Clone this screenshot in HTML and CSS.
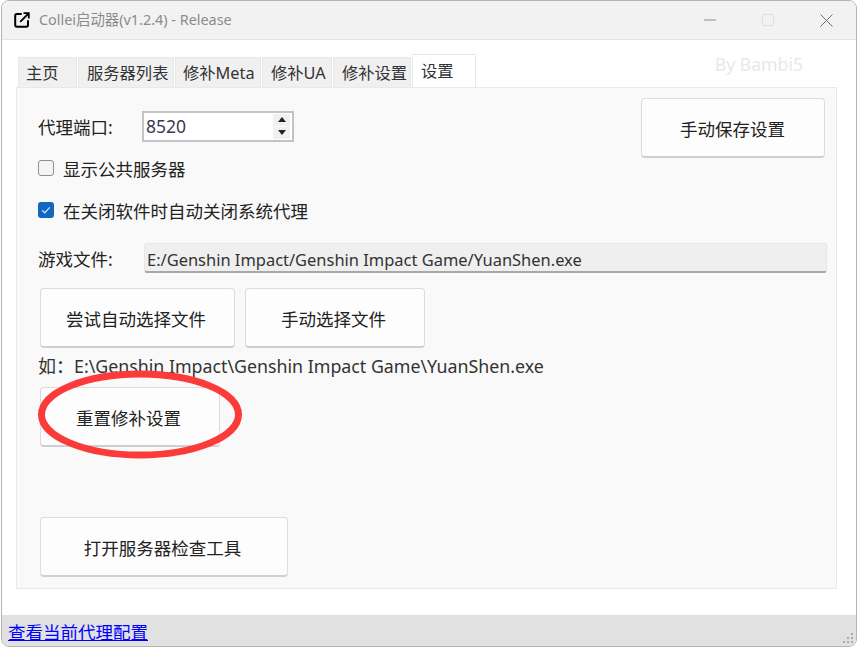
FILE: index.html
```html
<!DOCTYPE html>
<html lang="zh">
<head>
<meta charset="utf-8">
<title>Collei启动器</title>
<link rel="stylesheet" href="styles.css">
</head>
<body>
<div class="window">
  <header class="titlebar">
    <svg class="app-icon" viewBox="0 0 16 16" width="16" height="16"><path d="M7.800 2H3A1.800 1.800 0 0 0 1.200 3.800V13A1.800 1.800 0 0 0 3 14.800h9.200A1.800 1.800 0 0 0 14 13V8.200" fill="none" stroke="#000" stroke-width="2"/><path d="M6.200 9.800 14 2M9.500 1.200h5.300v5.300" fill="none" stroke="#000" stroke-width="1.800"/></svg>
    <span class="title">Collei启动器(v1.2.4) - Release</span>
    <div class="controls">
      <svg width="12" height="12" viewBox="0 0 12 12"><path d="M0 6h12" stroke="#8c8c8c"/></svg>
      <svg width="12" height="12" viewBox="0 0 12 12"><rect x=".5" y=".5" width="11" height="11" rx="1.500" fill="none" stroke="#dedede"/></svg>
      <svg width="13" height="13" viewBox="0 0 13 13"><path d="M.5.5l12 12M12.500.5l-12 12" stroke="#707070"/></svg>
    </div>
  </header>
  <main class="content">
    <nav class="tabs">
      <span class="tab t1">主页</span>
      <span class="tab t2">服务器列表</span>
      <span class="tab t3">修补Meta</span>
      <span class="tab t4">修补UA</span>
      <span class="tab t5">修补设置</span>
      <span class="tab active">设置</span>
      <span class="by">By Bambi5</span>
    </nav>
    <section class="pane">
      <div class="top">
        <div class="options">
          <div class="port-row">
            <label class="port-label">代理端口:</label>
            <div class="spin">
              <span class="spin-val">8520</span>
              <div class="spin-btns">
                <span class="spin-btn"><i class="up"></i></span>
                <span class="spin-btn"><i class="down"></i></span>
              </div>
            </div>
          </div>
          <div class="check-row r1"><span class="box"></span>显示公共服务器</div>
          <div class="check-row r2"><span class="box on"><svg viewBox="0 0 16 16" width="16" height="16"><path d="M4.200 8.300l2.600 2.500 5-5.400" fill="none" stroke="#cfe3f7" stroke-width="1.300"/></svg></span>在关闭软件时自动关闭系统代理</div>
        </div>
        <button class="btn save">手动保存设置</button>
      </div>
      <div class="file-row">
        <label class="file-label">游戏文件:</label>
        <div class="file-input">E:/Genshin Impact/Genshin Impact Game/YuanShen.exe</div>
      </div>
      <div class="btn-row">
        <button class="btn auto">尝试自动选择文件</button>
        <button class="btn manual">手动选择文件</button>
      </div>
      <p class="hint"><span class="hint-mark">如：</span>E:\Genshin Impact\Genshin Impact Game\YuanShen.exe</p>
      <button class="btn reset">重置修补设置</button>
      <button class="btn check">打开服务器检查工具</button>
    </section>
  </main>
  <footer class="status">
    <a class="link" href="#">查看当前代理配置</a>
    <svg class="grip" width="14" height="14" viewBox="0 0 14 14" fill="#a8a8a8"><rect x="10" y="1" width="2" height="2"/><rect x="6" y="5" width="2" height="2"/><rect x="10" y="5" width="2" height="2"/><rect x="2" y="9" width="2" height="2"/><rect x="6" y="9" width="2" height="2"/><rect x="10" y="9" width="2" height="2"/></svg>
  </footer>
</div>
<svg class="circle" width="859" height="648" viewBox="0 0 859 648"><ellipse cx="140" cy="414.500" rx="98.500" ry="40.500" fill="none" stroke="#fb3a3a" stroke-width="7"/></svg>
</body>
</html>
```
FILE: styles.css
```css
* { box-sizing: border-box; }
html, body { margin: 0; padding: 0; background: #fff; }
body {
  position: relative;
  width: 859px;
  height: 648px;
  overflow: hidden;
  font-family: "Noto Sans", "Noto Sans CJK SC", sans-serif;
  font-size: 17.5px;
  color: #222;
}
.window {
  margin-left: 1px;
  width: 856px;
  height: 647px;
  border: 1px solid #b4b4b4;
  border-radius: 8px;
  overflow: hidden;
  display: flex;
  flex-direction: column;
  background: #fff;
}
.titlebar {
  height: 39px;
  flex: none;
  background: #f2f2f2;
  border-bottom: 1px solid #e3e3e3;
  display: flex;
  align-items: center;
  padding-left: 12px;
}
.app-icon { flex: none; }
.title { margin-left: 9px; font-size: 14.4px; color: #8b8b8b; line-height: 1; }
.controls {
  margin-left: auto;
  width: 129px;
  margin-right: 23px;
  display: flex;
  align-items: center;
  justify-content: space-between;
}
.content { flex: 1; padding: 13px 0 0 14px; }
.tabs { display: flex; align-items: flex-end; height: 34px; position: relative; padding-left: 2px; }
.tab {
  height: 30px;
  background: #f0f0f0;
  border: 1px solid #e8e8e8;
  border-bottom: 0;
  font-size: 16.3px;
  line-height: 30px;
  padding-left: 7px;
  white-space: nowrap;
  color: #333;
  flex: none;
  margin-right: 1px;
}
.t1 { width: 59px; }
.t2 { width: 96px; padding-left: 8px; }
.t3 { width: 86px; }
.t4 { width: 70px; padding-left: 8px; }
.t5 { width: 78px; padding-left: 8px; }
.tab.active {
  width: 64px;
  height: 33px;
  line-height: 32px;
  padding-left: 8px;
  background: #fff;
  margin-right: 0;
}
.by { margin-left: auto; margin-right: 53px; align-self: center; font-size: 17.6px; color: #e9e9e9; margin-top: -13px; }
.pane {
  width: 821px;
  height: 502px;
  background: #f9f9f9;
  border: 1px solid #e9e9e9;
  padding: 10px 11px 0 22px;
  display: flex;
  flex-direction: column;
  align-items: flex-start;
}
.top { display: flex; justify-content: space-between; align-items: flex-start; width: 100%; height: 145px; }
.options { display: flex; flex-direction: column; }
.port-row { display: flex; align-items: center; margin-top: 13px; height: 30px; }
.port-label { width: 104px; margin-left: -1px; }
.spin {
  width: 152px;
  height: 31px;
  background: #fff;
  border: 2px solid #c2c2c8;
  display: flex;
  align-items: center;
  justify-content: space-between;
  padding: 0 2px;
}
.spin-val { font-size: 17.500px; color: #3a3a50; }
.spin-btns { display: flex; flex-direction: column; gap: 1px; }
.spin-btn { width: 17px; height: 12px; background: #f0f0f0; display: flex; align-items: center; justify-content: center; }
.up { width: 0; height: 0; border: 4px solid transparent; border-top: 0; border-bottom: 5px solid #222; }
.down { width: 0; height: 0; border: 4px solid transparent; border-bottom: 0; border-top: 5px solid #222; }
.check-row { display: flex; align-items: center; margin-left: -1px; height: 24px; }
.r1 { margin-top: 15px; }
.r2 { margin-top: 18px; }
.box {
  width: 16px;
  height: 16px;
  margin-right: 9px;
  border: 1px solid #8e8e8e;
  border-radius: 3px;
  background: #f4f4f4;
  flex: none;
}
.box.on { border: 0; background: #0f67c0; }
.box svg { display: block; }
.file-row { display: flex; align-items: center; height: 30px; width: 100%; }
.file-label { width: 106px; margin-left: -1px; flex: none; }
.file-input {
  width: 683px;
  flex: none;
  height: 30px;
  background: #efefef;
  border: 1px solid #e6e6e6;
  border-bottom: 2px solid #a8a8a8;
  border-radius: 3px;
  line-height: 31px;
  padding-left: 2px;
  font-size: 16.47px;
  color: #333;
}
.btn {
  height: 60px;
  background: #fdfdfd;
  border: 1px solid #dcdcdc;
  border-bottom: 2px solid #cfcfcf;
  border-radius: 4px;
  font: inherit;
  color: #222;
  padding: 2px 3px 0 0;
  flex: none;
}
.save { width: 184px; padding-right: 1px; }
.btn-row { display: flex; gap: 10px; margin-top: 15px; margin-left: 1px; }
.auto { width: 195px; }
.manual { width: 180px; }
.hint { margin: 6px 0 0 -1px; height: 25px; line-height: 25px; font-size: 17.8px; color: #333; white-space: nowrap; }
.hint-mark { font-size: 18px; }
.reset { width: 180px; margin: 8px 0 0 1px; }
.check { width: 248px; margin: 70px 0 0 1px; }
.status {
  height: 31px;
  flex: none;
  background: #e1e1e1;
  display: flex;
  align-items: center;
  justify-content: space-between;
  padding-left: 6px;
  position: relative;
}
.link { color: #0000ff; text-decoration: underline; line-height: 1; padding-top: 5px; }
.grip { position: absolute; right: 1px; bottom: 0; }
.circle { position: absolute; left: 0; top: 0; pointer-events: none; }
```
